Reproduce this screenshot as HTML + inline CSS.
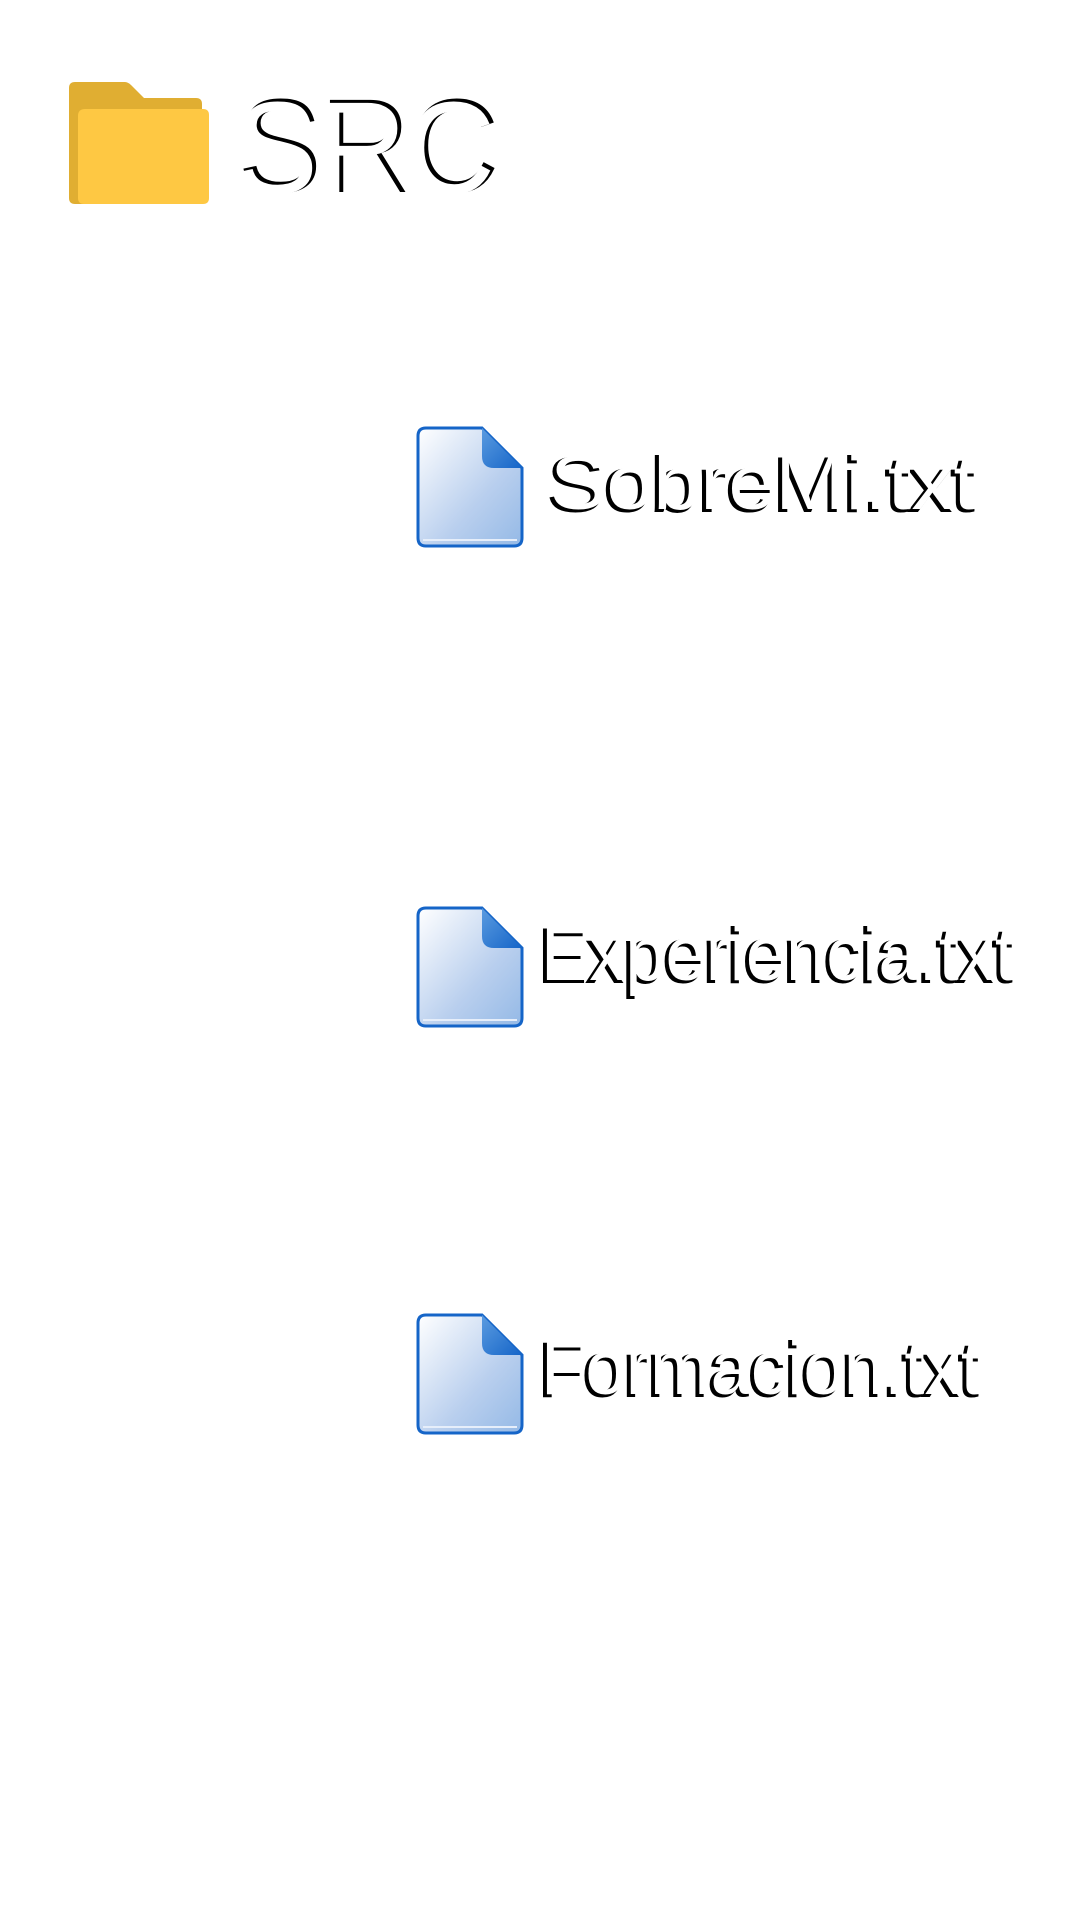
<!DOCTYPE html>
<html><head><meta charset="utf-8"><style>
html,body{margin:0;padding:0;background:#fff;width:1080px;height:1920px;overflow:hidden}
svg{display:block}
text{font-family:"Liberation Sans",sans-serif}
</style></head><body>
<svg width="1080" height="1920" viewBox="0 0 1080 1920" xmlns="http://www.w3.org/2000/svg">
<defs>
<linearGradient id="pg" x1="0" y1="0" x2="1" y2="1">
<stop offset="0" stop-color="#ffffff"/><stop offset="0.6" stop-color="#b9cfee"/><stop offset="1" stop-color="#94b9e6"/>
</linearGradient>
<linearGradient id="cg" x1="0" y1="0" x2="1" y2="1">
<stop offset="0" stop-color="#5b9be0"/><stop offset="1" stop-color="#1565c8"/>
</linearGradient>
<g id="doc">
<path d="M8 0 H64 L104 40 V110 Q104 118 96 118 H8 Q0 118 0 110 V8 Q0 0 8 0 Z" fill="url(#pg)" stroke="#1565c8" stroke-width="3"/>
<path d="M64 0 L104 40 H76 Q64 40 64 28 Z" fill="url(#cg)"/>
<path d="M5 112 H99" stroke="#e6eefa" stroke-width="2"/>
</g>
</defs>
<path d="M75 82 H125 Q128 82 131 85 L144 98 H196 Q202 98 202 104 V198 Q202 204 196 204 H75 Q69 204 69 198 V88 Q69 82 75 82 Z" fill="#e0ae32"/>
<path d="M85 109 H203 Q209 109 209 115 V198 Q209 204 203 204 H84 Q78 204 78 198 V116 Q78 109 85 109 Z" fill="#fec843"/>
<text x="239" y="191" font-size="131" textLength="259" lengthAdjust="spacingAndGlyphs" fill="#000" stroke="#000" stroke-width="2">SRC</text>
<text x="236" y="193" font-size="131" textLength="259" lengthAdjust="spacingAndGlyphs" fill="#fff">SRC</text>
<use href="#doc" x="418" y="428"/>
<text x="547" y="511" font-size="76" textLength="427" lengthAdjust="spacingAndGlyphs" fill="#000" stroke="#000" stroke-width="2">SobreMi.txt</text>
<text x="550" y="509" font-size="76" textLength="427" lengthAdjust="spacingAndGlyphs" fill="#fff">SobreMi.txt</text>
<use href="#doc" x="418" y="908"/>
<text x="538" y="982" font-size="76" textLength="474" lengthAdjust="spacingAndGlyphs" fill="#000" stroke="#000" stroke-width="2">Experiencia.txt</text>
<text x="541" y="980" font-size="76" textLength="474" lengthAdjust="spacingAndGlyphs" fill="#fff">Experiencia.txt</text>
<use href="#doc" x="418" y="1315"/>
<text x="538" y="1396" font-size="76" textLength="440" lengthAdjust="spacingAndGlyphs" fill="#000" stroke="#000" stroke-width="2">Formacion.txt</text>
<text x="541" y="1394" font-size="76" textLength="440" lengthAdjust="spacingAndGlyphs" fill="#fff">Formacion.txt</text>
</svg>
</body></html>
